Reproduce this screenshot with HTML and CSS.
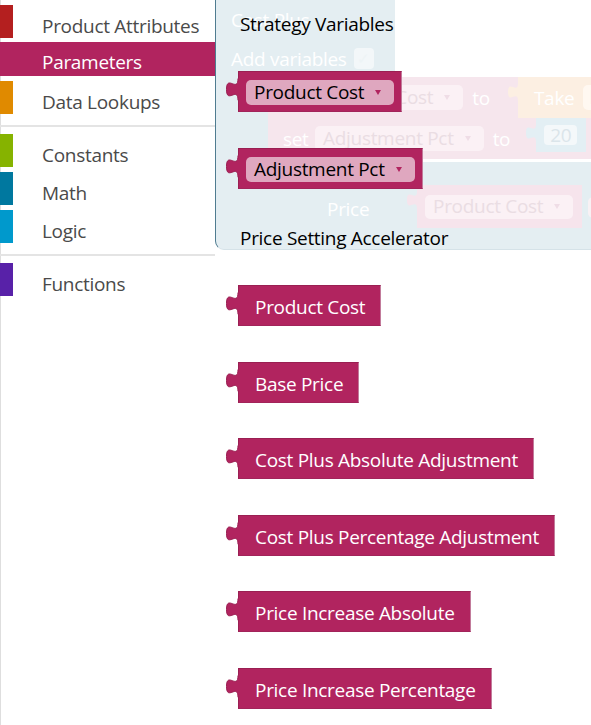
FILE: index.html
```html
<!DOCTYPE html>
<html>
<head>
<meta charset="utf-8">
<link rel="stylesheet" href="styles.css">
</head>
<body>
<div class="app">
  <nav class="toolbox">
    <div class="cat"><span class="swatch sw-attr"></span><span class="cat-label">Product Attributes</span></div>
    <div class="cat selected"><span class="swatch sw-param"></span><span class="cat-label">Parameters</span></div>
    <div class="cat"><span class="swatch sw-lookup"></span><span class="cat-label">Data Lookups</span></div>
    <div class="sep"></div>
    <div class="cat"><span class="swatch sw-const"></span><span class="cat-label">Constants</span></div>
    <div class="cat"><span class="swatch sw-math"></span><span class="cat-label">Math</span></div>
    <div class="cat"><span class="swatch sw-logic"></span><span class="cat-label">Logic</span></div>
    <div class="sep"></div>
    <div class="cat"><span class="swatch sw-func"></span><span class="cat-label">Functions</span></div>
  </nav>

  <main class="workspace">
    <div class="canvas">
      <div class="ws-frame">
        <div class="frame-head">
          <span class="ws-text">Cost Plus</span>
          <span class="head-row"><span class="ws-text">Add variables</span><span class="ws-check">✓</span></span>
        </div>
      </div>
      <div class="ws-notch"></div>

      <div class="set-stack">
        <div class="set-row">
          <span class="ws-text set-word">set</span>
          <span class="ws-field">Product Cost<span class="ws-arrow"></span></span>
          <span class="ws-text to-word">to</span>
          <span class="ws-value take">
            <svg class="ws-tab" viewBox="0 0 14 34" width="14" height="34"><path d="M14,6 L12,6 c0,12 -10,-4 -10,9 s10,-3 10,9 L14,24 Z" fill="#fcefe2"/></svg>
            <span class="ws-text">Take</span><span class="ws-field small-field">la</span>
          </span>
        </div>
        <div class="set-row">
          <span class="ws-text set-word">set</span>
          <span class="ws-field">Adjustment Pct<span class="ws-arrow"></span></span>
          <span class="ws-text to-word">to</span>
          <span class="ws-value num">
            <svg class="ws-tab" viewBox="0 0 14 34" width="14" height="34"><path d="M14,6 L12,6 c0,12 -10,-4 -10,9 s10,-3 10,9 L14,24 Z" fill="#e3eff4"/></svg>
            <span class="num-field">20</span>
          </span>
        </div>
      </div>

      <span class="ws-text price-word">Price</span>
      <div class="ws-price-block">
        <svg class="ws-tab" viewBox="0 0 14 34" width="14" height="34"><path d="M14,6 L12,6 c0,12 -10,-4 -10,9 s10,-3 10,9 L14,24 Z" fill="#f6e4ec"/></svg>
        <span class="ws-field">Product Cost<span class="ws-arrow"></span></span>
      </div>
      <div class="ws-frag"></div>
    </div>

    <div class="flyout">
      <div class="fly-label">Strategy Variables</div>
      <div class="block var">
        <svg class="tab" viewBox="0 0 14 41" width="14" height="41"><path d="M14,7.5 L12,7.5 c0,14.5 -11.5,-4.4 -11.5,10.9 s11.5,-3.6 11.5,10.9 L14,29.3 Z" fill="#b1245f"/><path d="M12,7.5 c0,14.5 -11.5,-4.4 -11.5,10.9 s11.5,-3.6 11.5,10.9" fill="none" stroke="#9a1f52" stroke-width="1"/></svg>
        <span class="field">Product Cost<span class="arrow"></span></span>
      </div>
      <div class="block var">
        <svg class="tab" viewBox="0 0 14 41" width="14" height="41"><path d="M14,7.5 L12,7.5 c0,14.5 -11.5,-4.4 -11.5,10.9 s11.5,-3.6 11.5,10.9 L14,29.3 Z" fill="#b1245f"/><path d="M12,7.5 c0,14.5 -11.5,-4.4 -11.5,10.9 s11.5,-3.6 11.5,10.9" fill="none" stroke="#9a1f52" stroke-width="1"/></svg>
        <span class="field">Adjustment Pct<span class="arrow"></span></span>
      </div>
      <div class="fly-label second">Price Setting Accelerator</div>
      <div class="block">
        <svg class="tab" viewBox="0 0 14 41" width="14" height="41"><path d="M14,7.5 L12,7.5 c0,14.5 -11.5,-4.4 -11.5,10.9 s11.5,-3.6 11.5,10.9 L14,29.3 Z" fill="#b1245f"/><path d="M12,7.5 c0,14.5 -11.5,-4.4 -11.5,10.9 s11.5,-3.6 11.5,10.9" fill="none" stroke="#9a1f52" stroke-width="1"/></svg>
        Product Cost
      </div>
      <div class="block">
        <svg class="tab" viewBox="0 0 14 41" width="14" height="41"><path d="M14,7.5 L12,7.5 c0,14.5 -11.5,-4.4 -11.5,10.9 s11.5,-3.6 11.5,10.9 L14,29.3 Z" fill="#b1245f"/><path d="M12,7.5 c0,14.5 -11.5,-4.4 -11.5,10.9 s11.5,-3.6 11.5,10.9" fill="none" stroke="#9a1f52" stroke-width="1"/></svg>
        Base Price
      </div>
      <div class="block">
        <svg class="tab" viewBox="0 0 14 41" width="14" height="41"><path d="M14,7.5 L12,7.5 c0,14.5 -11.5,-4.4 -11.5,10.9 s11.5,-3.6 11.5,10.9 L14,29.3 Z" fill="#b1245f"/><path d="M12,7.5 c0,14.5 -11.5,-4.4 -11.5,10.9 s11.5,-3.6 11.5,10.9" fill="none" stroke="#9a1f52" stroke-width="1"/></svg>
        Cost Plus Absolute Adjustment
      </div>
      <div class="block">
        <svg class="tab" viewBox="0 0 14 41" width="14" height="41"><path d="M14,7.5 L12,7.5 c0,14.5 -11.5,-4.4 -11.5,10.9 s11.5,-3.6 11.5,10.9 L14,29.3 Z" fill="#b1245f"/><path d="M12,7.5 c0,14.5 -11.5,-4.4 -11.5,10.9 s11.5,-3.6 11.5,10.9" fill="none" stroke="#9a1f52" stroke-width="1"/></svg>
        Cost Plus Percentage Adjustment
      </div>
      <div class="block">
        <svg class="tab" viewBox="0 0 14 41" width="14" height="41"><path d="M14,7.5 L12,7.5 c0,14.5 -11.5,-4.4 -11.5,10.9 s11.5,-3.6 11.5,10.9 L14,29.3 Z" fill="#b1245f"/><path d="M12,7.5 c0,14.5 -11.5,-4.4 -11.5,10.9 s11.5,-3.6 11.5,10.9" fill="none" stroke="#9a1f52" stroke-width="1"/></svg>
        Price Increase Absolute
      </div>
      <div class="block">
        <svg class="tab" viewBox="0 0 14 41" width="14" height="41"><path d="M14,7.5 L12,7.5 c0,14.5 -11.5,-4.4 -11.5,10.9 s11.5,-3.6 11.5,10.9 L14,29.3 Z" fill="#b1245f"/><path d="M12,7.5 c0,14.5 -11.5,-4.4 -11.5,10.9 s11.5,-3.6 11.5,10.9" fill="none" stroke="#9a1f52" stroke-width="1"/></svg>
        Price Increase Percentage
      </div>
    </div>
  </main>
</div>
</body>
</html>
```

FILE: styles.css
```css
* { box-sizing: border-box; }

html, body {
  margin: 0;
  padding: 0;
  background: #fff;
}

body {
  font-family: "Open Sans", "Noto Sans", sans-serif;
  font-size: 19px;
  letter-spacing: -0.3px;
  width: 591px;
  height: 725px;
  overflow: hidden;
}

.app {
  display: flex;
  width: 591px;
  height: 725px;
}

/* ---------- toolbox ---------- */
.toolbox {
  width: 215px;
  flex: none;
  height: 725px;
  border-left: 1px solid #dedede;
  padding-top: 5px;
  display: flex;
  flex-direction: column;
  background: #fff;
}

.cat {
  display: flex;
  height: 33px;
  margin-bottom: 5px;
  color: #4a4a4a;
  margin-left: -1px;
}

.cat.selected {
  background: #b1245f;
  color: #fff;
  height: 34px;
  margin-top: -1px;
}

.swatch {
  width: 13px;
  height: 33px;
  flex: none;
}

.cat-label {
  margin-left: 29px;
  padding-top: 9px;
  line-height: 25px;
  white-space: nowrap;
}

.cat.selected .cat-label { padding-top: 8px; }

.sw-attr { background: #b41f1f; }
.sw-param { background: #b1245f; }
.sw-lookup { background: #e08a00; }
.sw-const { background: #86b300; }
.sw-math { background: #00789f; }
.sw-logic { background: #0099cc; }
.sw-func { background: #5821a8; }

.sep {
  height: 2px;
  background: #e4e4e4;
  margin: 6px 0 7px -1px;
  flex: none;
}

/* ---------- workspace (faded) ---------- */
.workspace {
  position: relative;
  flex: 1;
  height: 725px;
  overflow: hidden;
}

.canvas {
  position: absolute;
  inset: 0;
}

.ws-text {
  color: #fff;
  line-height: 24px;
  white-space: nowrap;
}

.ws-frame {
  position: absolute;
  left: 0;
  top: 0;
  width: 420px;
  height: 250px;
  background: #e4eef2;
  border-left: 1.5px solid #4f7c90;
  border-bottom: 1px solid #d5e2e8;
  border-bottom-left-radius: 9px;
}

.frame-head {
  display: flex;
  flex-direction: column;
  gap: 15px;
  padding: 8px 0 0 15px;
}

.head-row {
  display: flex;
  align-items: center;
  gap: 7px;
}

.ws-check {
  width: 20px;
  height: 21px;
  border-radius: 4px;
  background: rgba(255, 255, 255, 0.55);
  color: #eef4f6;
  font-size: 15px;
  line-height: 21px;
  text-align: center;
  margin-top: -2px;
}

.ws-notch {
  position: absolute;
  left: 180px;
  top: 0;
  width: 240px;
  height: 77px;
  background: #fff;
}

.set-stack {
  position: absolute;
  left: 53px;
  top: 77px;
  width: 340px;
  height: 85px;
  background: #f6e6ed;
  border-bottom: 3px solid #fff;
  display: flex;
  flex-direction: column;
}

.set-row {
  display: flex;
  align-items: center;
  height: 41px;
  padding-left: 15px;
  position: relative;
}

.set-word { width: 25px; }

.ws-field {
  display: flex;
  align-items: center;
  height: 25px;
  padding: 0 13px 0 8px;
  border-radius: 5px;
  background: #fbf1f5;
  color: #eadde3;
  line-height: 25px;
  white-space: nowrap;
  margin-left: 7px;
  gap: 11px;
}

.ws-arrow {
  width: 0;
  height: 0;
  border-left: 3.5px solid transparent;
  border-right: 3.5px solid transparent;
  border-top: 5px solid #efdde6;
}

.to-word { margin-left: 9px; }

.ws-value {
  position: relative;
  display: flex;
  align-items: center;
  align-self: flex-start;
}

.ws-tab {
  position: absolute;
  left: -12px;
  top: 0;
}

.take {
  background: #fcefe2;
  height: 41px;
  margin-left: 28px;
  padding-left: 16px;
  gap: 9px;
}

.small-field {
  margin-left: 0;
  background: #fff8f1;
  color: #f1e6dc;
  padding: 0 10px 0 6px;
}

.num {
  background: #e3eff4;
  height: 34px;
  margin-left: 26px;
  padding: 0 9px 0 8px;
}

.num-field {
  background: #f4f8fa;
  color: #dbe5ea;
  height: 20px;
  line-height: 20px;
  border-radius: 4px;
  padding: 0 6px;
}

.price-word {
  position: absolute;
  left: 112px;
  top: 197px;
}

.ws-price-block {
  position: absolute;
  left: 202px;
  top: 185px;
  width: 165px;
  height: 43px;
  background: #f6e4ec;
  display: flex;
  align-items: center;
  padding-left: 1px;
}

.ws-price-block .ws-field {
  height: 24px;
  width: 148px;
  justify-content: space-between;
}

.ws-frag {
  position: absolute;
  left: 373px;
  top: 197px;
  width: 30px;
  height: 21px;
  border-radius: 5px;
  background: #f8f1f4;
}

/* ---------- flyout ---------- */
.flyout {
  position: absolute;
  inset: 0;
  padding: 12px 0 0 23px;
  display: flex;
  flex-direction: column;
  align-items: flex-start;
}

.fly-label {
  color: #000;
  line-height: 24px;
  margin-left: 2px;
  white-space: nowrap;
}

.fly-label.second {
  margin-top: 37px;
}

.block {
  position: relative;
  display: flex;
  align-items: center;
  height: 41px;
  background: #b1245f;
  border: 1px solid #9a1f52;
  border-right-color: #c27b9b;
  border-bottom-color: #a2245a;
  color: #fff;
  padding: 3px 15px 0 16px;
  line-height: 36px;
  white-space: nowrap;
  margin-top: 35.6px;
}

.fly-label + .block { margin-top: 35px; }
.fly-label.second + .block { margin-top: 35px; }
.block.var + .block.var { margin-top: 36px; }

.block .tab {
  position: absolute;
  left: -13px;
  top: -1px;
}

.block.var {
  padding: 1px 7px 0 7px;
  align-items: center;
}

.field {
  display: flex;
  align-items: center;
  gap: 11px;
  height: 25px;
  line-height: 25px;
  padding: 0 13px 0 8px;
  background: #dfa7bf;
  border-radius: 5px;
  color: #000;
}

.arrow {
  width: 0;
  height: 0;
  border-left: 3.5px solid transparent;
  border-right: 3.5px solid transparent;
  border-top: 5px solid #b1245f;
}
```
